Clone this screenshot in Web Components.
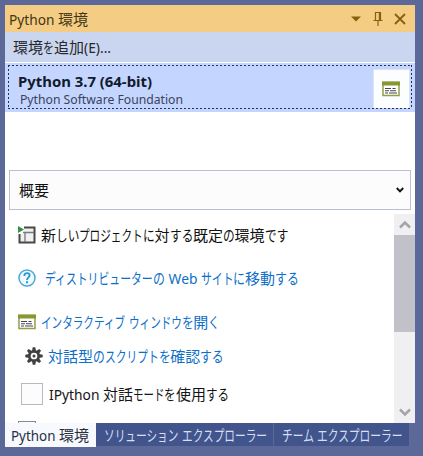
<!DOCTYPE html>
<html lang="ja"><head><meta charset="utf-8"><title>Python 環境</title>
<style>html,body{margin:0;height:100%;overflow:hidden;background:#5c6998}</style></head>
<body><environment-window></environment-window>
<script>
const define=(name,html,init)=>customElements.define(name,class extends HTMLElement{
 constructor(){super();this.attachShadow({mode:'open'}).innerHTML=html}
 connectedCallback(){if(init)init.call(this)}
});
// Narrow-kana text: ideographs keep their full advance, kana fill the remaining width.
define('ui-text',`<style>:host{display:block;white-space:pre;font-family:"Noto Sans","Noto Sans CJK JP",sans-serif;line-height:20px;height:20px;flex:none}
#line{display:flex}.run{display:block;flex:none}.run>span{display:inline-block;transform-origin:0 50%;white-space:pre}</style><div id="line"></div>`,function(){
 const line=this.shadowRoot.getElementById('line');line.textContent='';
 const total=+this.getAttribute('width');this.style.width=total+'px';
 const runs=(this.getAttribute('text').match(/[\u4e00-\u9fff]+|[\u3040-\u309f]+|[\u30a0-\u30ff]+|[^\u3040-\u30ff\u4e00-\u9fff]+/g)||[]).map(t=>{
  const box=document.createElement('span'),s=document.createElement('span');box.className='run';s.textContent=t;box.append(s);line.append(box);
  return{box,s,kind:/[\u4e00-\u9fff]/.test(t)?'k':/[\u3040-\u30ff]/.test(t)?'j':'l',weight:/[\u3040-\u309f]/.test(t)?1.1:1,w:s.getBoundingClientRect().width};
 });
 const flexKind=runs.some(r=>r.kind=='j')?'j':'l';
 const fixed=runs.filter(r=>r.kind!=flexKind).reduce((a,r)=>a+r.w*(r.kind=='l'?.92:1),0);
 const free=runs.filter(r=>r.kind==flexKind).reduce((a,r)=>a+r.w*r.weight,0);
 for(const r of runs){const f=r.kind==flexKind?r.weight*(total-fixed)/free:r.kind=='l'?.92:1;r.box.style.width=r.w*f+'px';r.s.style.transform='scaleX('+f+')'}
});
const icons={
 down:[12,8,'<path d="M1 1.500h10L6 6.500z" fill="#86600d"/>'],
 pin:[10,16,'<path d="M2.500 9.500v-8h5v8M0.500 9.500h9M5 10v5" fill="none" stroke="#86600d" stroke-width="1.200"/><path d="M5.800 1h2v8h-2z" fill="#86600d"/>'],
 close:[12,12,'<path d="M1 1l10 10M11 1L1 11" stroke="#86600d" stroke-width="1.800"/>'],
 win:[18,16,'<path d="M1 1.500h16v13H1z" fill="#fff" stroke="#91a047" stroke-width="1.500"/><path d="M0 .5h18v4H0z" fill="#87982e"/><path d="M3 7.500h6M10.500 7.500h3M3 9.700h4M8 9.700h6M3 12h3M7 12h8" stroke="#444451" stroke-width="1.100"/>'],
 project:[18,18,'<path d="M1 8h16v9H1zM6 1h11v7H6z" fill="#f1f1f1"/><path d="M6 1.500h10.500v15h-15V8" fill="none" stroke="#484848" stroke-width="2"/><path d="M5 6.500h11M7 7v9" fill="none" stroke="#77797a" stroke-width="1.300"/><path d="M0 0l6 3.500L0 7z" fill="#369142"/>'],
 help:[18,18,'<circle cx="9" cy="9" r="8" fill="#f0faff" stroke="#48a9d7" stroke-width="1.500"/><path d="M6.400 7V6.300c0-3 5.200-2.800 5.200.1C11.600 8.300 9 8.500 9 11" fill="none" stroke="#2699d2" stroke-width="1.900"/><path d="M8 12.300h2v2H8z" fill="#2699d2"/>'],
 gear:[18,18,'<g fill="#414141"><path d="M7.700.3h2.600l.7 4H7zM7.700 17.700h2.600l.7-4H7zM.3 7.700v2.600l4 .7V7zM17.700 7.700v2.600l-4 .7V7z"/><path transform="rotate(45 9 9)" d="M7.700.3h2.600l.7 4H7zM7.700 17.700h2.600l.7-4H7zM.3 7.700v2.600l4 .7V7zM17.700 7.700v2.600l-4 .7V7z"/></g><circle cx="9" cy="9" r="4.700" fill="#fff" stroke="#414141" stroke-width="2.700"/><circle cx="9" cy="9" r="1.500" fill="#414141"/>'],
 chevron:[8,6,'<path d="M.8 1l3.200 3.300L7.200 1" fill="none" stroke="#111" stroke-width="1.900"/>'],
 up:[12,9,'<path d="M1 7.500l5-5 5 5" fill="none" stroke="#a5a5a5" stroke-width="2.500"/>'],
 dn:[12,9,'<path d="M1 1.500l5 5 5-5" fill="none" stroke="#a5a5a5" stroke-width="2.500"/>']
};
define('ui-icon','<style>:host{display:block;flex:none}svg{display:block}</style><div></div>',function(){
 const [w,h,p]=icons[this.getAttribute('name')];this.shadowRoot.querySelector('div').innerHTML=`<svg width="${w}" height="${h}" viewBox="0 0 ${w} ${h}">${p}</svg>`});
define('title-bar',`<style>:host{display:flex;align-items:center;height:27px;background:#f4cc83;color:#423715;padding:0 9px 0 4px;font-size:15px}ui-text{margin-right:auto}.down{margin-right:11px}.pin{margin-right:11px}</style>
<ui-text text="Python 環境" width="79"></ui-text><ui-icon class="down" name="down"></ui-icon><ui-icon class="pin" name="pin"></ui-icon><ui-icon name="close"></ui-icon>`);
define('command-bar',`<style>:host{display:flex;align-items:center;height:30px;background:#cad5ef;color:#26272b;padding-left:8px;font-size:15px}</style><ui-text text="環境を追加(E)..." width="98"></ui-text>`);
define('environment-item',`<style>:host{display:block;height:49px;background:#c4d5ff;padding:2px 3px 4px;margin-top:1px;box-sizing:border-box}
.focus{height:44px;box-sizing:border-box;display:flex;justify-content:space-between;padding:4px 2px 0 10px;background:repeating-linear-gradient(90deg,#26304a 0 2px,transparent 2px 4px) 0 0/100% 1px no-repeat,repeating-linear-gradient(90deg,#26304a 0 2px,transparent 2px 4px) 0 100%/100% 1px no-repeat,repeating-linear-gradient(#26304a 0 2px,transparent 2px 4px) 0 0/1px 100% no-repeat,repeating-linear-gradient(#26304a 0 2px,transparent 2px 4px) 100% 0/1px 100% no-repeat}
.name{font-size:15px;font-weight:700;color:#111b2a;margin-top:2px}.vendor{font-size:12.500px;color:#38445c;margin:-1px 0 0 2px}
.button{width:37px;height:39px;border:1px solid #dce3f2;border-bottom:0;box-sizing:border-box;background:#fcfdfe;display:flex;align-items:center;justify-content:center}.button ui-icon{margin-right:2px}</style>
<div class="focus"><div><ui-text class="name" text="Python 3.7 (64-bit)" width="134"></ui-text><ui-text class="vendor" text="Python Software Foundation" width="163"></ui-text></div><div class="button"><ui-icon name="win"></ui-icon></div></div>`);
define('view-select',`<style>:host{display:flex;align-items:center;justify-content:space-between;height:40px;box-sizing:border-box;border:1px solid #b8c0d4;background:#fcfcfc;margin:58px 4px 4px;padding:0 6px 0 9px;font-size:15px;color:#111}</style><ui-text text="概要" width="30"></ui-text><ui-icon name="chevron"></ui-icon>`);
define('action-row',`<style>:host{display:flex;align-items:center;gap:var(--gap,5px);height:24px;font-size:15px;color:#0e6fc8}</style>`,function(){
 for(const [tag,attrs] of [['ui-icon',{name:'icon'}],['ui-text',{text:'text',width:'width'}]]){
  const el=document.createElement(tag);for(const k in attrs)el.setAttribute(k,this.getAttribute(attrs[k]));this.shadowRoot.append(el)}
});
define('check-row',`<style>:host{display:flex;align-items:center;gap:6px;height:24px;font-size:15px;color:#151515}i{display:block;width:var(--box,22px);height:22px;box-sizing:border-box;border:1px solid var(--edge,#b5bac7);background:#fcfcfd;flex:none}</style><i></i><slot></slot>`);
define('scroll-bar',`<style>:host{display:flex;flex-direction:column;align-items:center;width:21px;background:#f0f0f2}div{width:21px;height:97px;background:#c1c1ca;margin:6px 0 auto}ui-icon{margin:6px 0 0}.d{margin:0 0 6px}</style><ui-icon name="up"></ui-icon><div></div><ui-icon class="d" name="dn"></ui-icon>`);
define('tab-strip',`<style>:host{display:flex;height:24px;margin-left:5px;font-size:15px;color:#d5def4;gap:1px}div{height:23px;display:flex;align-items:center;background:#41558c;padding:0 6px 0 8px}.on{height:24px;background:#f7f9fe;color:#27303f;padding:0 7px 0 6px;margin-right:-1px}</style>
<div class="on"><ui-text text="Python 環境" width="78"></ui-text></div><div><ui-text text="ソリューション エクスプローラー" width="163"></ui-text></div><div><ui-text text="チーム エクスプローラー" width="121"></ui-text></div>`);
define('environment-window',`<style>:host{display:block;padding-top:5px;height:451px;background:#5c6998}main{width:410px;height:418px;margin-left:5px;background:#fff;display:flex;flex-direction:column;overflow:hidden}
main>*{flex:none}.body{height:209px;display:flex;overflow:hidden}.content{flex:1;height:209px;overflow:hidden;padding-left:13px;box-sizing:border-box}</style>
<main><title-bar></title-bar><command-bar></command-bar><environment-item></environment-item><view-select></view-select><div class="body"><div class="content">
<action-row icon="project" text="新しいプロジェクトに対する既定の環境です" width="247" style="color:#111;margin-top:9px"></action-row>
<action-row icon="help" text="ディストリビューターの Web サイトに移動する" width="254" style="--gap:9px;margin-top:19px"></action-row>
<action-row icon="win" text="インタラクティブ ウィンドウを開く" width="179" style="margin-top:20px"></action-row>
<action-row icon="gear" text="対話型のスクリプトを確認する" width="176" style="margin:10px 0 0 7px"></action-row>
<check-row style="margin:14px 0 0 3px"><ui-text text="IPython 対話モードを使用する" width="180"></ui-text></check-row>
<check-row style="--edge:#858994;--box:18px;margin:14px 0 0 0"></check-row></div><scroll-bar></scroll-bar></div></main><tab-strip></tab-strip>`);
</script></body></html>
